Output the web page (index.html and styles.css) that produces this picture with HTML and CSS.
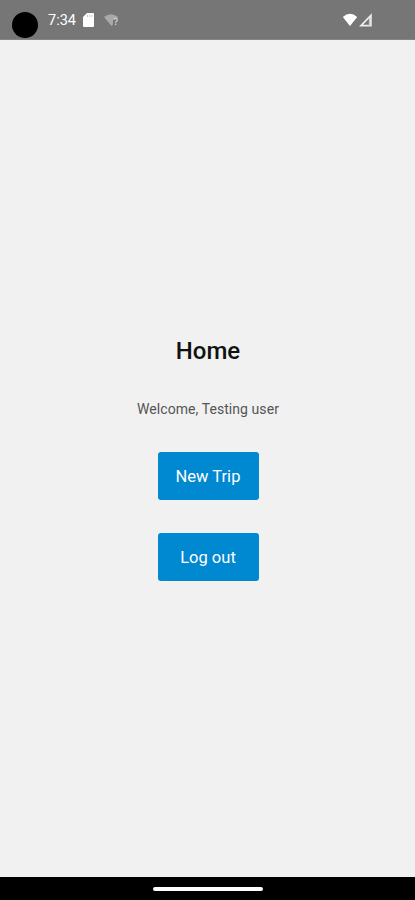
FILE: index.html
```html
<!DOCTYPE html>
<html lang="en">
<head>
  <meta charset="UTF-8" />
  <meta name="viewport" content="width=device-width, initial-scale=1.0"/>
  <title>Home</title>
  <link rel="stylesheet" href="styles.css">
</head>
<body>
  <div class="status-bar">
    <div class="camera"></div>
    <span class="time">7:34</span>
    <svg class="sd-card" width="11" height="14" viewBox="0 0 11 14">
      <path d="M4 0h6a1 1 0 0 1 1 1v12a1 1 0 0 1-1 1H1a1 1 0 0 1-1-1V4z" fill="#fff"/>
      <path d="M4.500 2v2M6.700 2v2M8.900 2v2" stroke="#ccc" stroke-width="1"/>
    </svg>
    <svg class="wifi-unknown" width="16" height="13" viewBox="0 0 16 13">
      <path d="M0 3Q7-2.500 14 3v1h-3L9 6v4.500L7.500 12z" fill="#a9a9a9"/>
      <path d="M9.800 6q.2-1.700 1.800-1.700 1.700 0 1.700 1.500 0 .9-.9 1.500-.7.500-.7 1.400M11.700 9.600v1.400" fill="none" stroke="#ccc" stroke-width="1.300"/>
    </svg>
    <div class="signals">
      <svg width="16" height="14" viewBox="0 0 16 14">
        <path d="M.8 4Q8-2.500 15.200 4L8 13z" fill="#fff"/>
      </svg>
      <svg width="14" height="14" viewBox="0 0 14 14">
        <path d="M11.900 2.300v10.300H2z" fill="none" stroke="#eee" stroke-width="1.700"/>
        <path d="M10.500 5v8" stroke="#ccc" stroke-width="1.300"/>
      </svg>
    </div>
  </div>

  <main class="container">
    <h1>Home</h1>
    <p>Welcome, Testing user</p>
    <button type="button">New Trip</button>
    <button type="button">Log out</button>
  </main>

  <div class="nav-bar">
    <div class="handle"></div>
  </div>
</body>
</html>
```
FILE: styles.css
```css
body {
  font-family: Roboto, sans-serif;
  background: #f1f1f1;
  display: flex;
  flex-direction: column;
  height: 100vh;
  margin: 0;
}

.status-bar {
  box-sizing: border-box;
  display: flex;
  align-items: center;
  height: 40px;
  padding: 1px 42px 0 12px;
  background: #767676;
  border-bottom: 1px solid #858585;
}

.camera {
  width: 26px;
  height: 26px;
  margin-top: 9px;
  border-radius: 50%;
  background: #000;
}

.time {
  width: 28px;
  margin-left: 10px;
  padding-top: 1px;
  font-size: 14.5px;
  color: #fff;
}

.sd-card {
  margin-left: 7px;
}

.wifi-unknown {
  margin-left: 10px;
}

.signals {
  display: flex;
  gap: 1px;
  margin-left: auto;
}

.container {
  flex: 1;
  display: flex;
  flex-direction: column;
  align-items: center;
  padding-top: 297px;
  padding-left: 1px;
}

h1 {
  margin: 0;
  font-size: 24px;
  line-height: 28px;
  font-weight: 500;
  color: #111;
}

p {
  margin: 36px 0 34px;
  font-size: 14px;
  line-height: 17px;
  letter-spacing: 0.07px;
  color: #555;
}

button {
  width: 101px;
  height: 48px;
  margin-bottom: 33px;
  padding: 0;
  border: none;
  border-radius: 3px;
  background: #0088d1;
  font-family: inherit;
  font-size: 16.5px;
  color: #fff;
}

.nav-bar {
  display: flex;
  justify-content: center;
  align-items: center;
  height: 23px;
  background: #000;
}

.handle {
  width: 110px;
  height: 4px;
  border-radius: 2px;
  background: #fff;
}
```
